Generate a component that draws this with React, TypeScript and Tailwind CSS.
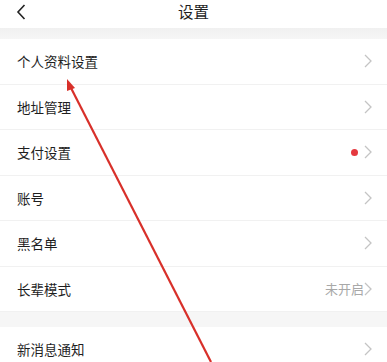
import React from 'react'

type Row = { label: string; dot?: boolean; value?: string }

const group1: Row[] = [
  { label: '个人资料设置' },
  { label: '地址管理' },
  { label: '支付设置', dot: true },
  { label: '账号' },
  { label: '黑名单' },
  { label: '长辈模式', value: '未开启' },
]

const group2: Row[] = [{ label: '新消息通知' }]

function Chevron() {
  return (
    <svg width="8" height="14" viewBox="0 0 8 14" className="shrink-0">
      <path d="M1 1l6 6-6 6" fill="none" stroke="#c4c4c4" strokeWidth="1.3" />
    </svg>
  )
}

function Item({ row }: { row: Row }) {
  return (
    <div className="flex h-[45.5px] items-center justify-between border-b border-[#f1f1f1] pl-[17px] pr-[15px]">
      <span className="text-[13.5px] text-[#1e1e1e]">{row.label}</span>
      <div className="flex items-center">
        {row.dot && <span className="mr-[6px] h-[7px] w-[7px] rounded-full bg-[#e5393f]" />}
        {row.value && <span className="text-[13px] text-[#a8a8a8]">{row.value}</span>}
        <Chevron />
      </div>
    </div>
  )
}

export default function App() {
  return (
    <div
      className="relative h-[362px] w-[387px] overflow-hidden bg-white"
      style={{ fontFamily: '"Noto Sans CJK SC", "Noto Sans", sans-serif' }}
    >
      <div className="relative flex h-[28px] items-center justify-center bg-white pb-[4px]">
        <svg width="10" height="16" viewBox="0 0 10 16" className="absolute left-[16px] top-[4px]">
          <path d="M8.5 1L2 8l6.5 7" fill="none" stroke="#222" strokeWidth="1.6" />
        </svg>
        <span className="text-[15.5px] text-[#1e1e1e]">设置</span>
      </div>
      <div className="h-[11px] bg-gradient-to-b from-[#f0f0f0] to-[#f6f6f6]" />
      <div className="bg-white">
        {group1.map((r) => (
          <Item key={r.label} row={r} />
        ))}
      </div>
      <div className="h-[15px] bg-[#f6f6f6]" />
      <div className="bg-white">
        {group2.map((r) => (
          <Item key={r.label} row={r} />
        ))}
      </div>

      <svg className="pointer-events-none absolute left-0 top-0" width="387" height="362" viewBox="0 0 387 362">
        <line x1="70" y1="86" x2="211" y2="362" stroke="#d8302a" strokeWidth="2.2" />
        <polygon points="67,79 75,88 67,91" fill="#d8302a" />
      </svg>
    </div>
  )
}
